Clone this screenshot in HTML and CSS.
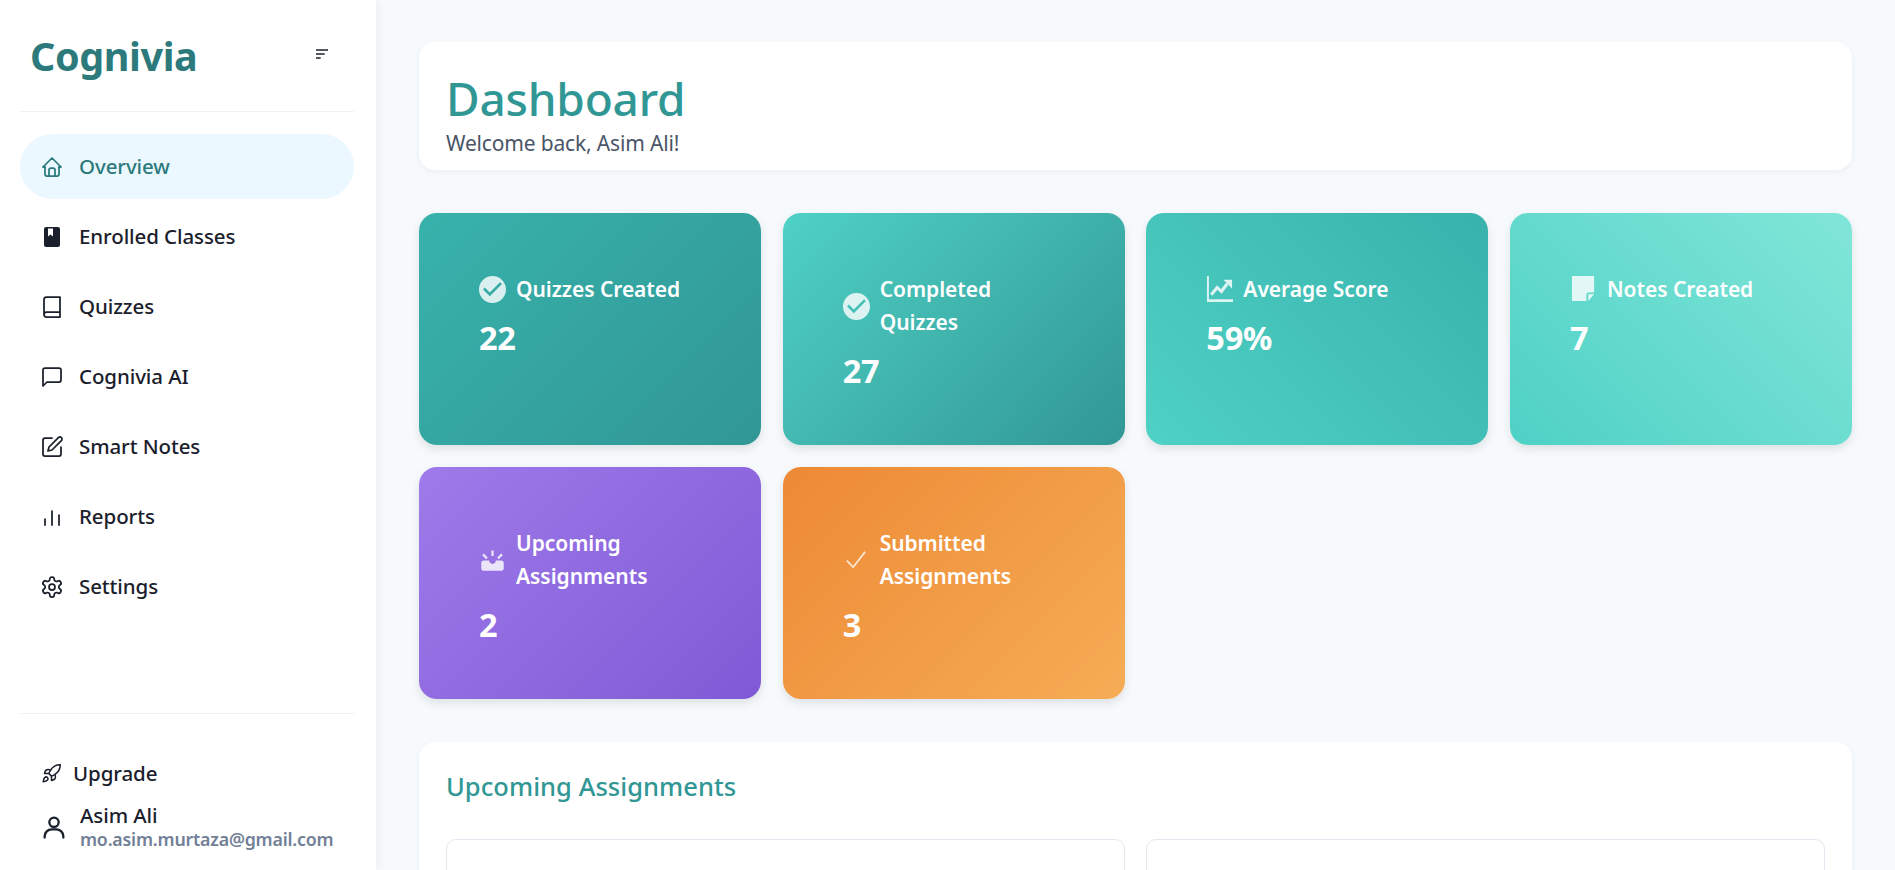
FILE: index.html
```html
<!DOCTYPE html>
<html lang="en">
<head>
<meta charset="utf-8">
<title>Cognivia Dashboard</title>
<link rel="stylesheet" href="styles.css">
</head>
<body>
<div class="app">
  <aside class="sidebar">
    <div class="brand">
      <span class="logo">Cognivia</span>
      <svg class="menu-btn" viewBox="0 0 24 24" fill="none" stroke="currentColor" stroke-width="2"><path d="M3 6h18M3 12h13M3 18h7"/></svg>
    </div>
    <nav class="nav">
      <a class="nav-item active"><svg class="ico" viewBox="0 0 24 24"><path d="M5 12H3l9-9 9 9h-2"/><path d="M5 12v7a2 2 0 0 0 2 2h10a2 2 0 0 0 2-2v-7"/><path d="M9 21v-6a2 2 0 0 1 2-2h2a2 2 0 0 1 2 2v6"/></svg><span class="nav-text">Overview</span></a>
      <a class="nav-item"><svg class="ico solid" viewBox="0 0 24 24"><path d="M6 2h12a2 2 0 0 1 2 2v16a2 2 0 0 1-2 2H6a2 2 0 0 1-2-2V4a2 2 0 0 1 2-2zm2 1.500v8l2.500-2 2.500 2v-8z" fill-rule="evenodd"/></svg><span class="nav-text">Enrolled Classes</span></a>
      <a class="nav-item"><svg class="ico" viewBox="0 0 24 24"><path d="M4 19.500v-15A2.500 2.500 0 0 1 6.500 2H20v20H6.500a2.500 2.500 0 0 1 0-5H20"/></svg><span class="nav-text">Quizzes</span></a>
      <a class="nav-item"><svg class="ico" viewBox="0 0 24 24"><path d="M21 15a2 2 0 0 1-2 2H7l-4 4V5a2 2 0 0 1 2-2h14a2 2 0 0 1 2 2z"/></svg><span class="nav-text">Cognivia AI</span></a>
      <a class="nav-item"><svg class="ico" viewBox="0 0 24 24"><path d="M12 3H5a2 2 0 0 0-2 2v14a2 2 0 0 0 2 2h14a2 2 0 0 0 2-2v-7"/><path d="M18.400 2.600a2.100 2.100 0 0 1 3 3L12 15l-4 1 1-4z"/></svg><span class="nav-text">Smart Notes</span></a>
      <a class="nav-item"><svg class="ico" viewBox="0 0 24 24"><path d="M12 20V6M19 20V10M5 20v-6"/></svg><span class="nav-text">Reports</span></a>
      <a class="nav-item"><svg class="ico" viewBox="0 0 24 24"><path d="M12.220 2h-.440a2 2 0 0 0-2 2v.180a2 2 0 0 1-1 1.730l-.430.250a2 2 0 0 1-2 0l-.150-.080a2 2 0 0 0-2.730.730l-.220.380a2 2 0 0 0 .730 2.730l.150.100a2 2 0 0 1 1 1.720v.510a2 2 0 0 1-1 1.740l-.150.090a2 2 0 0 0-.730 2.730l.220.380a2 2 0 0 0 2.730.730l.150-.080a2 2 0 0 1 2 0l.430.250a2 2 0 0 1 1 1.730V20a2 2 0 0 0 2 2h.440a2 2 0 0 0 2-2v-.180a2 2 0 0 1 1-1.730l.430-.250a2 2 0 0 1 2 0l.150.080a2 2 0 0 0 2.730-.730l.220-.390a2 2 0 0 0-.730-2.730l-.150-.080a2 2 0 0 1-1-1.740v-.500a2 2 0 0 1 1-1.740l.150-.090a2 2 0 0 0 .730-2.730l-.220-.380a2 2 0 0 0-2.730-.730l-.150.080a2 2 0 0 1-2 0l-.430-.250a2 2 0 0 1-1-1.730V4a2 2 0 0 0-2-2z"/><circle cx="12" cy="12" r="3"/></svg><span class="nav-text">Settings</span></a>
    </nav>
    <div class="side-foot">
      <a class="upgrade"><svg class="ico" viewBox="0 0 24 24"><path d="M4.500 16.500c-1.500 1.260-2 5-2 5s3.740-.500 5-2c.710-.840.700-2.130-.090-2.910a2.180 2.180 0 0 0-2.910-.090z"/><path d="M12 15l-3-3a22 22 0 0 1 2-3.950A12.880 12.880 0 0 1 22 2c0 2.720-.780 7.500-6 11a22.350 22.350 0 0 1-4 2z"/><path d="M9 12H4s.550-3.030 2-4c1.620-1.080 5 0 5 0"/><path d="M12 15v5s3.030-.550 4-2c1.080-1.620 0-5 0-5"/></svg><span>Upgrade</span></a>
      <div class="user">
        <svg class="user-ico" viewBox="0 0 24 24"><circle cx="12" cy="8" r="4"/><path d="M4 21v-1a6 6 0 0 1 6-6h4a6 6 0 0 1 6 6v1"/></svg>
        <div class="user-text">
          <div class="user-name">Asim Ali</div>
          <div class="user-mail">mo.asim.murtaza@gmail.com</div>
        </div>
      </div>
    </div>
  </aside>
  <main class="main">
    <header class="head-card">
      <h1 class="title">Dashboard</h1>
      <p class="welcome">Welcome back, Asim Ali!</p>
    </header>
    <section class="stats">
      <div class="stat c1">
        <div class="stat-label"><svg class="stat-ico" viewBox="2 2 20 20"><path d="M12 2C6.480 2 2 6.480 2 12s4.480 10 10 10 10-4.480 10-10S17.520 2 12 2zm-2 15-5-5 1.410-1.410L10 14.170l7.590-7.590L19 8l-9 9z"/></svg><span>Quizzes Created</span></div>
        <div class="stat-value">22</div>
      </div>
      <div class="stat c2">
        <div class="stat-label"><svg class="stat-ico" viewBox="2 2 20 20"><path d="M12 2C6.480 2 2 6.480 2 12s4.480 10 10 10 10-4.480 10-10S17.520 2 12 2zm-2 15-5-5 1.410-1.410L10 14.170l7.590-7.590L19 8l-9 9z"/></svg><span>Completed<br>Quizzes</span></div>
        <div class="stat-value">27</div>
      </div>
      <div class="stat c3">
        <div class="stat-label"><svg class="stat-ico" viewBox="0 0 28 28"><path d="M1 0h2v24h25v3H1z"/><path d="M5.500 19.500l6-7.500 4.500 4 6-8" fill="none" stroke="#fff" stroke-width="3.200"/><path d="M18 4h9v9z"/></svg><span>Average Score</span></div>
        <div class="stat-value">59%</div>
      </div>
      <div class="stat c4">
        <div class="stat-label"><svg class="stat-ico" viewBox="0 0 28 28"><path d="M2 0h23v17h-6a2 2 0 0 0-2 2v7H2z"/><path d="M19 19h6l-6 7z"/></svg><span>Notes Created</span></div>
        <div class="stat-value">7</div>
      </div>
      <div class="stat c5">
        <div class="stat-label"><svg class="stat-ico" viewBox="0 0 24 24"><path d="M21.160 7.260l-1.410-1.410-3.560 3.550 1.410 1.410s3.450-3.520 3.560-3.550zM13 3h-2v5h2V3zM6.400 10.810L7.810 9.400 4.260 5.840 2.840 7.260c.110.030 3.560 3.550 3.560 3.550zM20 12h-5c0 1.660-1.340 3-3 3s-3-1.340-3-3H4c-1.100 0-2 .900-2 2v5c0 1.100.900 2 2 2h16c1.100 0 2-.900 2-2v-5c0-1.100-.900-2-2-2z"/></svg><span>Upcoming<br>Assignments</span></div>
        <div class="stat-value">2</div>
      </div>
      <div class="stat c6">
        <div class="stat-label"><svg class="stat-ico" viewBox="0 0 28 28"><path d="M4 14l6.500 7L23 5" fill="none" stroke="#fff" stroke-width="1.800"/></svg><span>Submitted<br>Assignments</span></div>
        <div class="stat-value">3</div>
      </div>
    </section>
    <section class="panel">
      <h2 class="panel-title">Upcoming Assignments</h2>
      <div class="assign-grid">
        <div class="assign-card"></div>
        <div class="assign-card"></div>
      </div>
    </section>
  </main>
</div>
</body>
</html>
```
FILE: styles.css
```css
* { box-sizing: border-box; }
html, body { margin: 0; height: 100%; overflow: hidden; }
body { font-family: "Noto Sans", "Open Sans", sans-serif; color: #1a202c; background: #f7fafc; }
.app { display: flex; height: 870px; overflow: hidden; }

.sidebar { width: 376px; flex: none; height: 870px; background: #fff; padding: 0 22px 0 20px; display: flex; flex-direction: column; box-shadow: 2px 0 10px rgba(0,0,0,.05); position: relative; }
.brand { height: 112px; border-bottom: 1px solid #edf2f7; display: flex; align-items: center; justify-content: space-between; padding: 0 24px 0 10px; flex: none; }
.logo { font-size: 39.500px; font-weight: 700; color: #2c7a7b; letter-spacing: -.4px; line-height: 1; margin-top: 2px; }
.menu-btn { width: 16px; height: 16px; color: #1a202c; margin-top: -4px; }

.nav { display: flex; flex-direction: column; gap: 5.150px; margin-top: 22px; flex: 1; }
.nav-item { height: 65px; display: flex; align-items: center; gap: 15px; padding-left: 20px; border-radius: 33px; font-size: 20.500px; font-weight: 500; letter-spacing: -.1px; color: #1a202c; }
.nav-text { margin-top: -2px; }
.nav-item.active { background: #ebf8ff; color: #2c7a7b; }
.ico { width: 24px; height: 24px; flex: none; fill: none; stroke: currentColor; stroke-width: 1.750; stroke-linecap: round; stroke-linejoin: round; }
.ico.solid { fill: currentColor; stroke: none; }

.side-foot { flex: none; height: 157px; border-top: 1px solid #edf2f7; padding: 44px 0 0 20px; }
.upgrade { display: flex; align-items: center; gap: 11px; height: 30px; font-size: 20.500px; font-weight: 500; letter-spacing: -.1px; }
.upgrade .ico { width: 21px; height: 21px; margin-left: 1px; }
.user { display: flex; align-items: center; gap: 12px; margin-top: 14px; }
.user-ico { width: 28px; height: 28px; margin-top: 2px; flex: none; fill: none; stroke: #1a202c; stroke-width: 2; stroke-linecap: round; stroke-linejoin: round; }
.user-name { font-size: 20.500px; font-weight: 500; line-height: 26px; letter-spacing: -.1px; }
.user-mail { font-size: 17.800px; font-weight: 600; color: #718096; line-height: 22px; letter-spacing: -.2px; white-space: nowrap; }

.main { flex: 1; min-width: 0; padding: 42px 43px 0; }
.head-card { height: 128px; background: #fff; border-radius: 16px; box-shadow: 0 2px 6px rgba(0,0,0,.05); padding: 29px 27px 0; }
.title { margin: 0; font-size: 46px; font-weight: 500; line-height: 55px; color: #319795; letter-spacing: -.2px; }
.welcome { margin: 3px 0 0; font-size: 21px; line-height: 28px; color: #4a5568; letter-spacing: -.17px; }

.stats { display: grid; grid-template-columns: repeat(4, 1fr); gap: 22px 21.700px; margin-top: 43px; }
.stat { border-radius: 18px; padding: 60px 30px 51px 60px; color: #fff; box-shadow: 0 4px 10px rgba(0,0,0,.1); min-height: 232px; }
.c1 { background: linear-gradient(135deg, #38b2ac, #319795); }
.c2 { background: linear-gradient(135deg, #4fd1c5, #319795); }
.c3 { background: linear-gradient(45deg, #4fd1c5, #38b2ac); }
.c4 { background: linear-gradient(45deg, #4fd1c5, #81e6d9); }
.c5 { background: linear-gradient(135deg, #9f7aea, #805ad5); }
.c6 { background: linear-gradient(135deg, #ed8936, #f6ad55); }
.stat-label { display: flex; align-items: center; gap: 10px; font-size: 21px; font-weight: 600; line-height: 33px; letter-spacing: -.05px; }
.stat-ico { width: 27px; height: 27px; flex: none; fill: #fff; opacity: .82; }
.stat-value { font-size: 32.500px; font-weight: 700; line-height: 44px; margin-top: 10px; letter-spacing: -.3px; }

.panel { margin-top: 43px; background: #fff; border-radius: 16px; padding: 27px 27px 40px; box-shadow: 0 2px 6px rgba(0,0,0,.05); }
.panel-title { margin: 0; font-size: 25.500px; font-weight: 500; line-height: 34px; color: #319795; letter-spacing: .05px; }
.assign-grid { display: grid; grid-template-columns: 1fr 1fr; gap: 21px; margin-top: 36px; }
.assign-card { height: 160px; border: 1px solid #e2e8f0; border-radius: 10px; }
```
